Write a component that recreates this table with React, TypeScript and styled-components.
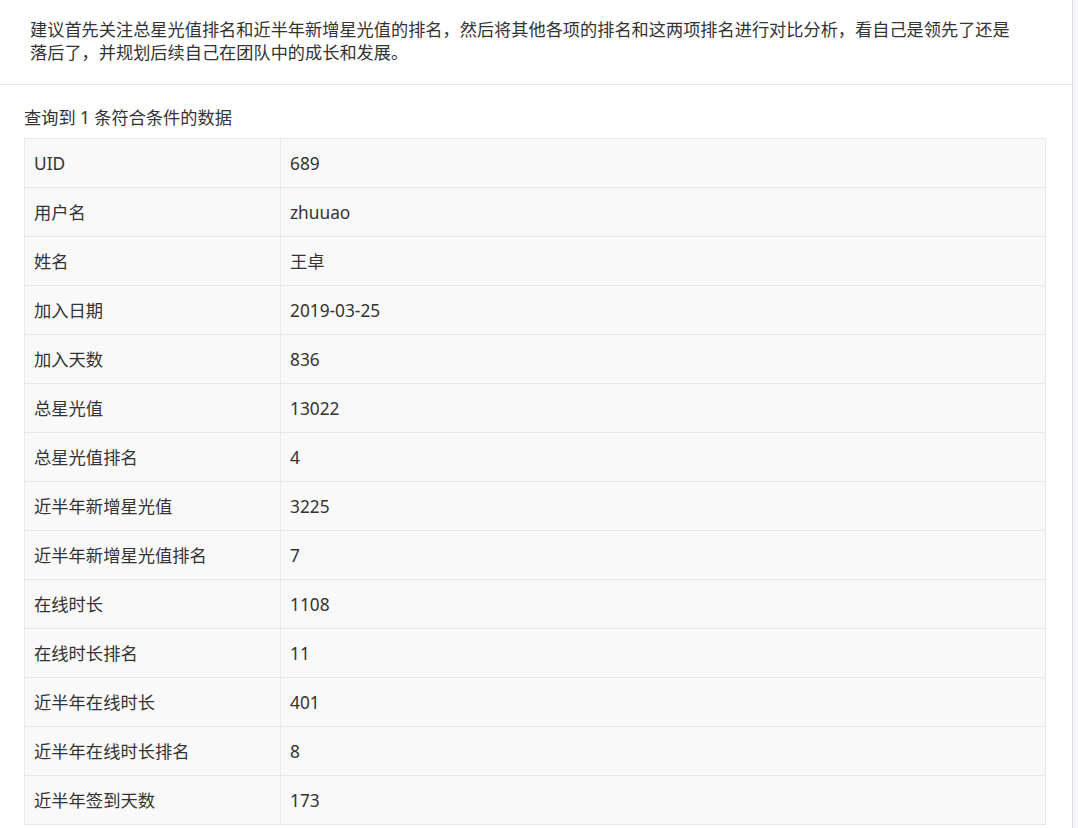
import React from "react";
import styled, { createGlobalStyle } from "styled-components";

const GlobalStyle = createGlobalStyle`
  html, body {
    margin: 0;
    padding: 0;
    background: #ffffff;
  }
  body {
    font-family: "Noto Sans", "Noto Sans CJK SC", sans-serif;
    color: #333333;
  }
`;

const Page = styled.div`
  display: flex;
  min-height: 828px;
`;

const Main = styled.div`
  width: 1072px;
  flex: none;
  border-right: 1px solid #dcdcdc;
  background: #ffffff;
`;

const Side = styled.div`
  flex: 1;
  background: #f5f5fb;
`;

const Notice = styled.div`
  padding: 18px 50px 20px 30px;
  font-size: 17.2px;
  line-height: 23px;
  border-bottom: 1px solid #e8e8e8;
  color: #333;
`;

const Content = styled.div`
  padding: 21px 26px 0 24px;
`;

const Summary = styled.div`
  font-size: 17.2px;
  line-height: 23px;
  margin-bottom: 9px;
  color: #333;
`;

const Table = styled.table`
  width: 100%;
  border-collapse: collapse;
  background: #f9f9f9;
  font-size: 17.3px;
  color: #333;
`;

const Row = styled.tr`
  height: 49px;
`;

const Cell = styled.td<{ $label?: boolean }>`
  border: 1px solid #e8e8e8;
  padding: 0 9px;
  width: ${(p) => (p.$label ? "237px" : "auto")};
  line-height: 23px;
  vertical-align: middle;
`;

const rows: [string, string][] = [
  ["UID", "689"],
  ["用户名", "zhuuao"],
  ["姓名", "王卓"],
  ["加入日期", "2019-03-25"],
  ["加入天数", "836"],
  ["总星光值", "13022"],
  ["总星光值排名", "4"],
  ["近半年新增星光值", "3225"],
  ["近半年新增星光值排名", "7"],
  ["在线时长", "1108"],
  ["在线时长排名", "11"],
  ["近半年在线时长", "401"],
  ["近半年在线时长排名", "8"],
  ["近半年签到天数", "173"],
];

export default function App() {
  return (
    <>
      <GlobalStyle />
      <Page>
        <Main>
          <Notice>
            建议首先关注总星光值排名和近半年新增星光值的排名，然后将其他各项的排名和这两项排名进行对比分析，看自己是领先了还是落后了，并规划后续自己在团队中的成长和发展。
          </Notice>
          <Content>
            <Summary>查询到 1 条符合条件的数据</Summary>
            <Table>
              <tbody>
                {rows.map(([k, v]) => (
                  <Row key={k}>
                    <Cell $label>{k}</Cell>
                    <Cell>{v}</Cell>
                  </Row>
                ))}
              </tbody>
            </Table>
          </Content>
        </Main>
        <Side />
      </Page>
    </>
  );
}
